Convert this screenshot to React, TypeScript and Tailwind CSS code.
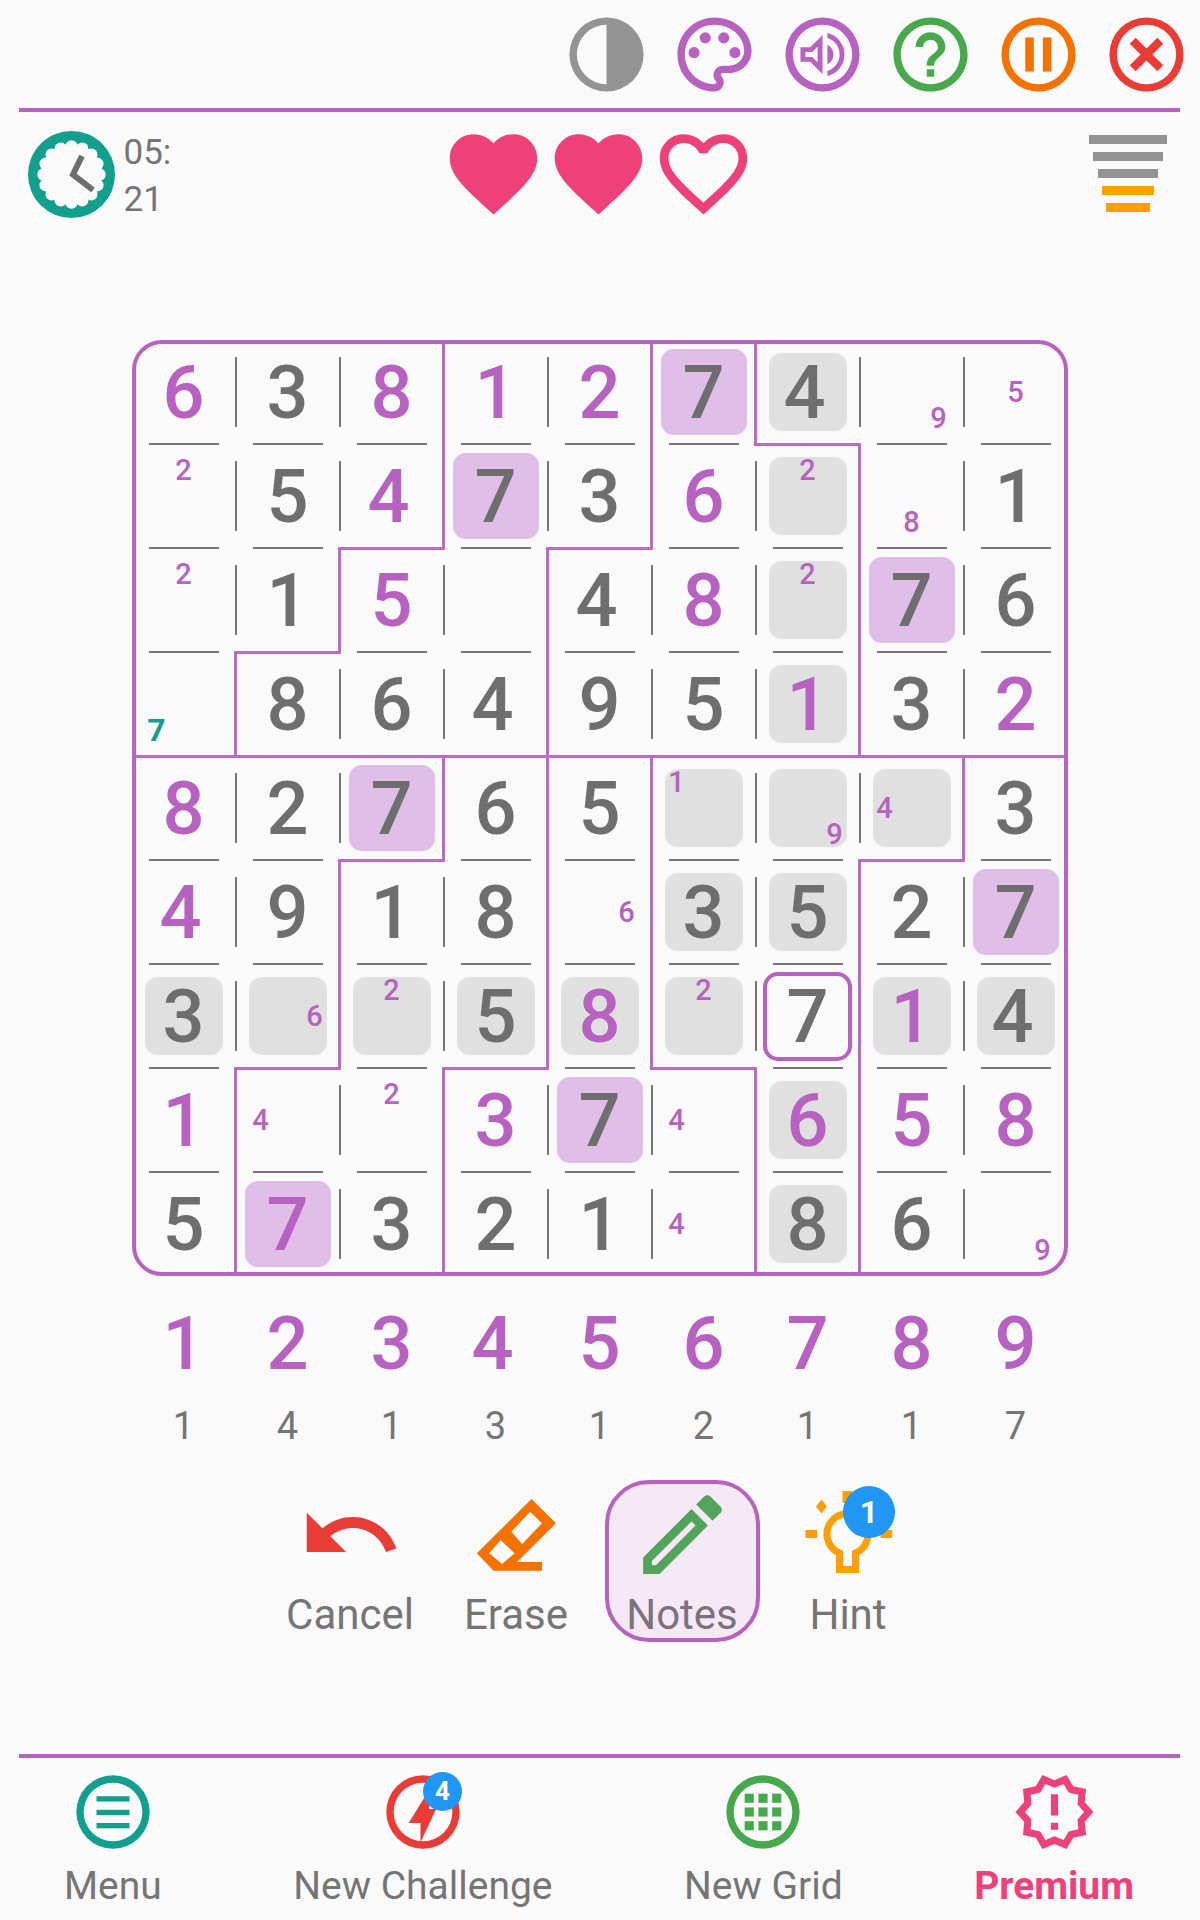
import type { ReactNode } from 'react';

const RING = 'M12 2a10 10 0 1 0 0 20 10 10 0 0 0 0-20zm0 18a8 8 0 1 1 0-16 8 8 0 0 1 0 16z';
const HEART =
  'M12 21.35l-1.45-1.32C5.4 15.36 2 12.28 2 8.5 2 5.42 4.42 3 7.5 3c1.74 0 3.41.81 4.5 2.09C13.09 3.81 14.76 3 16.5 3 19.58 3 22 5.42 22 8.5c0 3.78-3.4 6.86-8.55 11.54L12 21.35z';
const HEART_EMPTY =
  'M16.5 3c-1.74 0-3.41.81-4.5 2.09C10.91 3.81 9.24 3 7.5 3 4.42 3 2 5.42 2 8.5c0 3.78 3.4 6.86 8.55 11.54L12 21.35l1.45-1.32C18.6 15.36 22 12.28 22 8.5 22 5.42 19.58 3 16.5 3zm-4.4 15.55l-.1.1-.1-.1C7.14 14.24 4 11.39 4 8.5 4 6.5 5.5 5 7.5 5c1.54 0 3.04.99 3.57 2.36h1.87C13.46 5.99 14.96 5 16.5 5c2 0 3.5 1.5 3.5 3.5 0 2.89-3.14 5.74-7.9 10.05z';

// Jigsaw regions, one letter per cell
const REGIONS = [
  'AAABBCDDD',
  'AAABBCCDD',
  'AABBCCCDD',
  'ABBBCCCDD',
  'EEEFGHHHI',
  'EEFFGHHII',
  'EEFFGHHII',
  'EFFGGGHII',
  'EFFGGGHII',
];

// digit + p(urple) + g(ray tile) / h(ighlight tile) / s(elected); n = pencil note, t = teal note
const GRID = [
  ['6p', '3', '8p', '1p', '2p', '7h', '4g', 'n9', 'n5'],
  ['n2', '5', '4p', '7h', '3', '6p', 'n2g', 'n8', '1'],
  ['n2', '1', '5p', '', '4', '8p', 'n2g', '7h', '6'],
  ['t7', '8', '6', '4', '9', '5', '1pg', '3', '2p'],
  ['8p', '2', '7h', '6', '5', 'n1g', 'n9g', 'n4g', '3'],
  ['4p', '9', '1', '8', 'n6', '3g', '5g', '2', '7h'],
  ['3g', 'n6g', 'n2g', '5g', '8pg', 'n2g', '7s', '1pg', '4g'],
  ['1p', 'n4', 'n2', '3p', '7h', 'n4', '6pg', '5p', '8p'],
  ['5', '7ph', '3', '2', '1', 'n4', '8g', '6', 'n9'],
];

const COUNTS = [1, 4, 1, 3, 1, 2, 1, 1, 7];

function tileClass(token: string): string {
  if (token.endsWith('g')) return 'w-[78px] h-[78px] rounded-[13px] bg-[#e0e0e0]';
  if (token.endsWith('h')) return 'w-[86px] h-[86px] rounded-[13px] bg-[#e1bee7]';
  if (token.endsWith('s')) return 'w-[89px] h-[89px] rounded-[15px] border-4 border-[#b761c1]';
  return 'w-[78px] h-[78px]';
}

// The 4 sits a little left of the others in the picture's font
function digitNudge(digit: string): string {
  return digit === '4' ? '-translate-x-[3px]' : '';
}

function Notes({ token }: { token: string }) {
  const digit = Number(token[1]);
  return (
    <div className="grid grid-cols-[repeat(3,27px)] grid-rows-[repeat(3,26px)] place-items-center">
      {[1, 2, 3, 4, 5, 6, 7, 8, 9].map((n) => (
        <span
          key={n}
          className={
            token[0] === 't'
              ? 'text-[32px] leading-none font-bold text-[#139f8e]'
              : 'text-[29px] leading-none font-medium text-[#b761c1]'
          }
        >
          {n === digit ? digit : ''}
        </span>
      ))}
    </div>
  );
}

function Cell({ row, col }: { row: number; col: number }) {
  const token = GRID[row][col];
  const region = REGIONS[row][col];
  const isNote = token[0] === 'n' || token[0] === 't';
  const rightEdge = col < 8 && REGIONS[row][col + 1] !== region;
  const bottomEdge = row < 8 && REGIONS[row + 1][col] !== region;

  return (
    <div className="relative flex items-center justify-center">
      <div className={`flex shrink-0 items-center justify-center ${tileClass(token)}`}>
        {isNote ? (
          <Notes token={token} />
        ) : (
          <span
            className={`mt-[2px] text-[74px] leading-none font-medium ${digitNudge(token[0])} ${
              token[1] === 'p' ? 'text-[#b761c1]' : 'text-[#6e6e6e]'
            }`}
          >
            {token[0]}
          </span>
        )}
      </div>
      {col < 8 &&
        (rightEdge ? (
          <span
            className={`absolute -right-[1.5px] z-10 w-[3px] bg-[#bc69c7] ${row === 0 ? 'top-0' : '-top-[1.5px]'} ${
              row === 8 ? 'bottom-0' : '-bottom-[1.5px]'
            }`}
          />
        ) : (
          <span className="absolute top-[17px] -right-[1px] h-[70px] w-[2px] bg-[#757575]" />
        ))}
      {row < 8 &&
        (bottomEdge ? (
          <span
            className={`absolute -bottom-[1.5px] z-10 h-[3px] bg-[#bc69c7] ${col === 0 ? 'left-0' : '-left-[1.5px]'} ${
              col === 8 ? 'right-0' : '-right-[1.5px]'
            }`}
          />
        ) : (
          <span className="absolute left-[17px] -bottom-[1px] h-[2px] w-[70px] bg-[#757575]" />
        ))}
    </div>
  );
}

function Icon({ className, color, children }: { className: string; color: string; children: ReactNode }) {
  return (
    <svg viewBox="0 0 24 24" fill={color} className={`shrink-0 ${className}`}>
      {children}
    </svg>
  );
}

function ClockIcon() {
  const bumps = Array.from({ length: 16 }, (_, i) => (i * Math.PI * 2) / 16);
  return (
    <svg viewBox="0 0 87 87" className="mt-[19px] h-[87px] w-[87px] shrink-0">
      <circle cx="43.5" cy="43.5" r="43.5" fill="#139f8e" />
      <circle cx="43.5" cy="43.5" r="30" fill="#fafafa" />
      {bumps.map((a) => (
        <circle key={a} cx={43.5 + 28 * Math.cos(a)} cy={43.5 + 28 * Math.sin(a)} r="6.2" fill="#fafafa" />
      ))}
      <polyline points="54,25 45,43.5 65,59" fill="none" stroke="#6e6e6e" strokeWidth="6" />
    </svg>
  );
}

function HeaderIcons() {
  const size = 'w-[89px] h-[89px]';
  return (
    <div className="flex justify-end gap-[19px] pt-[9.5px] pr-[9.5px] pb-[9.5px]">
      <Icon className={size} color="#949494">
        <path fillRule="evenodd" d="M12 2a10 10 0 1 0 0 20 10 10 0 0 0 0-20zM12 4v16a8 8 0 0 1 0-16z" />
      </Icon>
      <Icon className={size} color="#b761c1">
        <path d="M12 22C6.49 22 2 17.51 2 12S6.49 2 12 2s10 4.04 10 9c0 3.31-2.69 6-6 6h-1.77c-.28 0-.5.22-.5.5 0 .12.05.23.13.33.41.47.64 1.06.64 1.67 0 1.38-1.12 2.5-2.5 2.5zm0-18c-4.41 0-8 3.59-8 8s3.59 8 8 8c.28 0 .5-.22.5-.5 0-.16-.08-.28-.14-.35-.41-.46-.63-1.05-.63-1.65 0-1.38 1.12-2.5 2.5-2.5H16c2.21 0 4-1.79 4-4 0-3.86-3.59-7-8-7z" />
        <circle cx="6.5" cy="11.5" r="1.5" />
        <circle cx="9.5" cy="7.5" r="1.5" />
        <circle cx="14.5" cy="7.5" r="1.5" />
        <circle cx="17.5" cy="11.5" r="1.5" />
      </Icon>
      <Icon className={size} color="#b761c1">
        <path d={RING} />
        <path
          transform="translate(12 12) scale(.66) translate(-12 -12)"
          d="M3 9v6h4l5 5V4L7 9H3zm7-.17v6.34L7.83 13H5v-2h2.83L10 8.83zM16.5 12c0-1.77-1.02-3.29-2.5-4.03v8.05c1.48-.73 2.5-2.25 2.5-4.02zM14 3.23v2.06c2.89.86 5 3.54 5 6.71s-2.11 5.85-5 6.71v2.06c4.01-.91 7-4.49 7-8.77 0-4.28-2.99-7.86-7-8.77z"
        />
      </Icon>
      <Icon className={size} color="#48a94c">
        <path d="M11 18h2v-2h-2v2zm1-16C6.48 2 2 6.48 2 12s4.48 10 10 10 10-4.48 10-10S17.52 2 12 2zm0 18c-4.41 0-8-3.59-8-8s3.59-8 8-8 8 3.59 8 8-3.59 8-8 8zm0-14c-2.21 0-4 1.79-4 4h2c0-1.1.9-2 2-2s2 .9 2 2c0 2-3 1.75-3 5h2c0-2.25 3-2.5 3-5 0-2.21-1.79-4-4-4z" />
      </Icon>
      <Icon className={size} color="#f57100">
        <path d={RING} />
        <rect x="8.43" y="7.4" width="2.3" height="9.2" />
        <rect x="13.2" y="7.4" width="2.3" height="9.2" />
      </Icon>
      <Icon className={size} color="#ea3c36">
        <path d={RING} />
        <path
          transform="translate(12 12) scale(1.13) translate(-12 -12)"
          d="M14.59 8L12 10.59 9.41 8 8 9.41 10.59 12 8 14.59 9.41 16 12 13.41 14.59 16 16 14.59 13.41 12 16 9.41 14.59 8z"
        />
      </Icon>
    </div>
  );
}

function StatusRow() {
  const heart = 'w-[105px] h-[105px]';
  return (
    <div className="flex h-[228px] items-start pl-[27.5px]">
      <div className="flex w-[413px] shrink-0 items-start">
        <ClockIcon />
        <div className="mt-[17px] ml-[9px] text-[35px] leading-[47px] text-[#757575]">
          <div>05:</div>
          <div>21</div>
        </div>
      </div>
      <div className="mt-[9px] flex">
        <Icon className={heart} color="#ef4179">
          <path d={HEART} />
        </Icon>
        <Icon className={heart} color="#ef4179">
          <path d={HEART} />
        </Icon>
        <Icon className={heart} color="#ef4179">
          <path d={HEART_EMPTY} />
        </Icon>
      </div>
      <div className="mt-[23px] mr-[33px] ml-auto flex w-[78px] flex-col items-center gap-[8px]">
        <div className="h-[9px] w-[78px] bg-[#939393]" />
        <div className="h-[9px] w-[70px] bg-[#939393]" />
        <div className="h-[9px] w-[60px] bg-[#939393]" />
        <div className="h-[9px] w-[52px] bg-[#ffa000]" />
        <div className="h-[9px] w-[44px] bg-[#ffa000]" />
      </div>
    </div>
  );
}

function Board() {
  return (
    <div className="relative ml-[131.5px] grid h-[936px] w-[936px] grid-cols-9 grid-rows-9">
      {GRID.map((cells, row) => cells.map((_, col) => <Cell key={`${row}-${col}`} row={row} col={col} />))}
      <div className="pointer-events-none absolute inset-0 z-20 rounded-[30px] border-4 border-[#b761c1]" />
    </div>
  );
}

function NumberPad() {
  return (
    <div className="mt-[26px] ml-[131.5px] grid w-[936px] grid-cols-9 text-center">
      {COUNTS.map((count, i) => (
        <div key={i}>
          <div
            className={`flex h-[84px] items-center justify-center text-[74px] leading-none font-medium text-[#b761c1] ${digitNudge(
              String(i + 1),
            )}`}
          >
            {i + 1}
          </div>
          <div className="flex h-[80px] items-center justify-center text-[38px] leading-none text-[#757575]">
            {count}
          </div>
        </div>
      ))}
    </div>
  );
}

function Tool({ label, active, children }: { label: string; active?: boolean; children: ReactNode }) {
  return (
    <div
      className={`flex h-[162px] w-[155px] flex-col items-center rounded-[44px] border-4 ${
        active ? 'border-[#b761c1] bg-[#f5e9f5] text-[#7c717d]' : 'border-transparent text-[#757575]'
      }`}
    >
      <div className="relative -mt-[2px] h-[105px] w-[105px] shrink-0">{children}</div>
      <div className="mt-[4px] text-[42px] leading-[47px]">{label}</div>
    </div>
  );
}

function Toolbar() {
  return (
    <div className="mt-[14px] flex justify-center gap-[11px] pr-[2px]">
      <Tool label="Cancel">
        <Icon className="h-[105px] w-[105px]" color="#ea3c36">
          <path d="M12.5 8c-2.65 0-5.05.99-6.9 2.6L2 7v9h9l-3.62-3.62c1.39-1.16 3.16-1.88 5.12-1.88 3.54 0 6.55 2.31 7.6 5.5l2.37-.78C21.08 11.03 17.15 8 12.5 8z" />
        </Icon>
      </Tool>
      <Tool label="Erase">
        <svg viewBox="0 0 105 105" className="h-[105px] w-[105px]">
          <path
            fill="#f57100"
            fillRule="evenodd"
            d="M67.5 17 L92 41.3 L53 80 H78 V88.7 H29.6 L12.8 71.3 Z M66.2 29.7 L47.3 49.7 L58.2 62 L78 41.3 Z M36.7 58 L25.4 71.3 L38 82 L50.6 71.3 Z"
          />
        </svg>
      </Tool>
      <Tool label="Notes" active>
        <Icon className="h-[105px] w-[105px]" color="#52a45a">
          <path d="M14.06 9.02l.92.92L5.92 19H5v-.92l9.06-9.06M17.66 3c-.25 0-.51.1-.7.29l-1.83 1.83 3.75 3.75 1.83-1.83c.39-.39.39-1.02 0-1.41l-2.34-2.34c-.2-.2-.45-.29-.71-.29zm-3.6 3.19L3 17.25V21h3.75L17.81 9.94l-3.75-3.75z" />
        </Icon>
      </Tool>
      <Tool label="Hint">
        <svg viewBox="0 0 105 105" className="h-[105px] w-[105px]">
          <path
            d="M43.5 87.5 V71 A20.5 20.5 0 1 1 59.5 71 V87.5 Z"
            fill="none"
            stroke="#ffa000"
            strokeWidth="7"
          />
          <g fill="#ffa000">
            <rect x="9.5" y="48" width="11.7" height="8" />
            <rect x="84.5" y="48" width="11.7" height="8" />
            <rect x="46.5" y="9" width="10" height="12" />
            <polygon points="25.5,17.5 31,24.5 25.5,31.5 20,24.5" />
          </g>
        </svg>
        <span className="absolute top-[4px] left-[47.5px] flex h-[52px] w-[52px] items-center justify-center rounded-full bg-[#2196f3] text-[32px] leading-none font-bold text-white">
          1
        </span>
      </Tool>
    </div>
  );
}

function NavItem({ label, strong, children }: { label: string; strong?: boolean; children: ReactNode }) {
  return (
    <div className="flex flex-col items-center">
      <div className="relative h-[88px]">{children}</div>
      <div className={`mt-[7px] text-[39px] leading-[47px] ${strong ? 'font-bold text-[#ef4179]' : 'text-[#757575]'}`}>
        {label}
      </div>
    </div>
  );
}

function BottomNav() {
  const size = 'w-[88px] h-[88px]';
  return (
    <div className="mx-[19px] mt-[9.5px] flex justify-between pr-[47px] pl-[45px]">
      <NavItem label="Menu">
        <Icon className={size} color="#139f8e">
          <path d={RING} />
          <rect x="7.5" y="7.7" width="9" height="1.45" />
          <rect x="7.5" y="11.4" width="9" height="1.45" />
          <rect x="7.5" y="15" width="9" height="1.45" />
        </Icon>
      </NavItem>
      <NavItem label="New Challenge">
        <Icon className={size} color="#ea3c36">
          <path d={RING} />
          <polygon points="13.7,5.9 8.1,15 11.3,15 11.3,20.3 15.6,11.2 13.7,11.2" />
        </Icon>
        <span className="absolute top-[4px] left-[44px] flex h-[39px] w-[39px] items-center justify-center rounded-full bg-[#2196f3] text-[26px] leading-none font-bold text-white">
          4
        </span>
      </NavItem>
      <NavItem label="New Grid">
        <Icon className={size} color="#48a94c">
          <path d={RING} />
          {[8.25, 12, 15.75].map((y) =>
            [8.25, 12, 15.75].map((x) => (
              <rect key={`${x}-${y}`} x={x - 1.25} y={y - 1.25} width="2.5" height="2.5" />
            )),
          )}
        </Icon>
      </NavItem>
      <NavItem label="Premium" strong>
        <Icon className="h-[88px] w-[85px]" color="#ef4179">
          <path d="m23 12-2.44-2.78.34-3.68-3.61-.82-1.89-3.18L12 3 8.6 1.54 6.71 4.72l-3.61.81.34 3.68L1 12l2.44 2.78-.34 3.69 3.61.82 1.89 3.18L12 21l3.4 1.46 1.89-3.18 3.61-.82-.34-3.68L23 12zm-4.51 2.11.26 2.79-2.74.62-1.43 2.41L12 18.82l-2.58 1.11-1.43-2.41-2.74-.62.26-2.8L3.66 12l1.85-2.12-.26-2.78 2.74-.61 1.43-2.41L12 5.18l2.58-1.11 1.43 2.41 2.74.62-.26 2.79L20.34 12l-1.85 2.11zM11 15h2v2h-2zm0-8h2v6h-2z" />
        </Icon>
      </NavItem>
    </div>
  );
}

export default function App() {
  return (
    <div className="min-h-[1920px] w-[1200px] overflow-hidden bg-[#fafafa] font-[Roboto,sans-serif]">
      <HeaderIcons />
      <div className="mr-[20px] ml-[19px] h-[4px] bg-[#b761c1]" />
      <StatusRow />
      <Board />
      <NumberPad />
      <Toolbar />
      <div className="mt-[112px] mr-[20px] ml-[19px] h-[4px] bg-[#b761c1]" />
      <BottomNav />
    </div>
  );
}
